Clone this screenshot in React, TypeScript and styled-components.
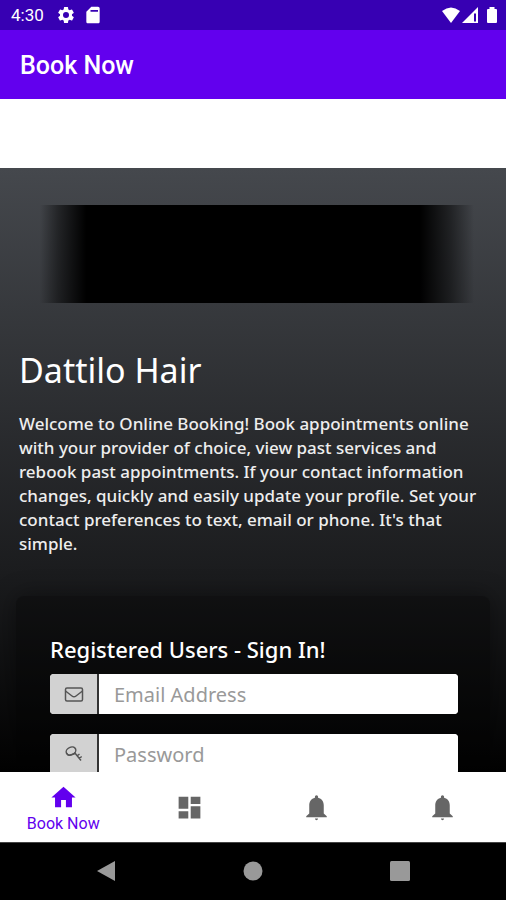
import React from "react";
import styled, { createGlobalStyle } from "styled-components";

const GlobalStyle = createGlobalStyle`
  *, *::before, *::after { box-sizing: border-box; }
  html, body, #root { height: 100%; margin: 0; }
  body { background: #fff; font-family: Roboto, "Noto Sans", sans-serif; }
`;

const Screen = styled.div`
  display: flex;
  flex-direction: column;
  height: 100vh;
  overflow: hidden;
`;

const StatusBar = styled.div`
  flex: none;
  display: flex;
  align-items: center;
  height: 30px;
  padding: 0 5px 0 11px;
  background: #3700b3;
  color: #fff;
  font-size: 17px;
`;

const Clock = styled.span`
  margin-right: 12px;
`;

const StatusIcon = styled.svg<{ $size: number; $gap?: number }>`
  flex: none;
  width: ${({ $size }) => $size}px;
  height: ${({ $size }) => $size}px;
  margin-right: ${({ $gap = 0 }) => $gap}px;
  fill: currentColor;
`;

const Spacer = styled.span`
  flex: 1;
`;

const AppBar = styled.header`
  flex: none;
  display: flex;
  align-items: center;
  height: 69px;
  padding: 2px 20px 0;
  background: #6200ee;
  color: #fff;
`;

const AppTitle = styled.h1`
  margin: 0;
  font-size: 25px;
  font-weight: 500;
  line-height: 32px;
`;

const Content = styled.main`
  flex: 1;
  min-height: 0;
  margin-top: 69px;
  padding: 37px 16px 0;
  overflow: hidden;
  background: linear-gradient(#45484d, #1b1c1e 67%, #020202);
  color: #fff;
  font-family: "Noto Sans", sans-serif;
`;

const Banner = styled.div`
  height: 98px;
  margin: 0 16px 0 24px;
  background: linear-gradient(
    to right,
    transparent,
    rgba(0, 0, 0, 0.45) 18px,
    #000 46px,
    #000 calc(100% - 54px),
    rgba(0, 0, 0, 0.5) calc(100% - 24px),
    transparent
  );
`;

const Intro = styled.section`
  padding: 0 3px;
`;

const SalonName = styled.h2`
  margin: 43px 0 18px;
  font-size: 34px;
  font-weight: 400;
  line-height: 48px;
`;

const Welcome = styled.p`
  margin: 0;
  color: #eee;
  font-size: 17px;
  font-weight: 500;
  line-height: 24px;
`;

const SignIn = styled.form`
  margin-top: 40px;
  padding: 37px 32px 24px 34px;
  border-radius: 8px;
  background: rgba(0, 0, 0, 0.32);
  box-shadow: 0 0 24px rgba(0, 0, 0, 0.4);
`;

const SignInTitle = styled.h3`
  margin: 0 0 9px;
  font-size: 22px;
  font-weight: 500;
  line-height: 32px;
`;

const Field = styled.div`
  display: flex;
  height: 40px;
  margin-bottom: 20px;
  overflow: hidden;
  border-radius: 4px;
  background: #fff;
`;

const FieldLabel = styled.label`
  flex: none;
  display: flex;
  align-items: center;
  justify-content: center;
  width: 49px;
  border-right: 2px solid #333;
  background: #d2d2d2;
`;

const FieldIcon = styled.svg`
  width: 20px;
  height: 20px;
  fill: none;
  stroke: #555;
  stroke-width: 1.5;
  stroke-linejoin: round;
`;

const FieldInput = styled.input`
  flex: 1;
  min-width: 0;
  padding: 0 15px;
  border: 0;
  outline: 0;
  background: #fff;
  color: #333;
  font: 400 20px "Noto Sans", sans-serif;

  &::placeholder {
    color: #999;
    opacity: 1;
  }
`;

const TabBar = styled.nav`
  flex: none;
  display: grid;
  grid-template-columns: repeat(4, 1fr);
  height: 70px;
  background: #fff;
`;

const Tab = styled.button<{ $active?: boolean }>`
  display: flex;
  flex-direction: column;
  align-items: center;
  justify-content: center;
  padding: ${({ $active }) => ($active ? "5px" : "0")} 0 0;
  border: 0;
  background: none;
  color: ${({ $active }) => ($active ? "#6200ee" : "#666")};
  font: 400 16px/24px Roboto, sans-serif;
`;

const TabIcon = styled.svg`
  width: 29px;
  height: 29px;
  fill: currentColor;
`;

const SystemBar = styled.div`
  flex: none;
  display: grid;
  grid-template-columns: repeat(3, 1fr);
  place-items: center;
  height: 58px;
  padding: 0 33px 2px;
  border-top: 1px solid #444;
  background: #000;
`;

const SystemButton = styled.button`
  display: flex;
  padding: 0;
  border: 0;
  background: none;

  svg {
    width: 24px;
    height: 24px;
    fill: #999;
  }
`;

const bell =
  "M12 1.800c-.8 0-1.300.6-1.300 1.300v.8C7.600 4.500 6 7.100 6 10.100V17l-2.500 2.200v.9h17v-.9L18 17v-6.900c0-3-1.600-5.600-4.700-6.200v-.8c0-.7-.5-1.300-1.300-1.300zM10.700 21h2.600q-.2 1.500-1.300 1.500T10.700 21z";

const tabs = [
  { name: "Book Now", label: true, path: "M10 20v-6h4v6h5v-8h3L12 3 2 12h3v8z" },
  { name: "Dashboard", label: false, path: "M3 13h8V3H3v10zm0 8h8v-6H3v6zm10 0h8V11h-8v10zm0-18v6h8V3h-8z" },
  { name: "Notifications", label: false, path: bell },
  { name: "Alerts", label: false, path: bell },
];

export default function App() {
  return (
    <Screen>
      <GlobalStyle />
      <StatusBar>
        <Clock>4:30</Clock>
        <StatusIcon $size={20} $gap={7} viewBox="0 0 24 24" aria-hidden="true">
          <path d="M19.14 12.94c.04-.3.06-.61.06-.94s-.02-.64-.07-.94l2.030-1.580a.49.49 0 0 0 .12-.61l-1.920-3.320a.49.49 0 0 0-.59-.22l-2.390.96a7 7 0 0 0-1.620-.94l-.36-2.540a.48.48 0 0 0-.48-.41h-3.840a.48.48 0 0 0-.47.41l-.36 2.540c-.59.24-1.130.57-1.620.94l-2.390-.96a.48.48 0 0 0-.59.22L2.740 8.870a.48.48 0 0 0 .12.61l2.030 1.580c-.05.3-.09.63-.09.94s.02.64.07.94l-2.030 1.580a.49.49 0 0 0-.12.61l1.920 3.320c.12.22.37.29.59.22l2.390-.96c.5.38 1.030.7 1.620.94l.36 2.540c.05.24.24.41.48.41h3.840c.24 0 .44-.17.47-.41l.36-2.540c.59-.24 1.130-.56 1.620-.94l2.390.96c.22.08.47 0 .59-.22l1.920-3.320a.48.48 0 0 0-.12-.61zM12 15.600a3.600 3.600 0 1 1 0-7.200 3.600 3.600 0 0 1 0 7.200z" />
        </StatusIcon>
        <StatusIcon $size={20} viewBox="0 0 24 24" aria-hidden="true">
          <path d="M18 2h-8L4 8v12c0 1.100.9 2 2 2h12c1.100 0 2-.9 2-2V4c0-1.100-.9-2-2-2zm-9 4h9v2H9z" />
        </StatusIcon>
        <Spacer />
        <StatusIcon $size={20} viewBox="0 0 20 20" aria-hidden="true">
          <path d="M10 18 1 6Q10-1 19 6z" />
        </StatusIcon>
        <StatusIcon $size={18} $gap={4} viewBox="0 0 18 18" aria-hidden="true">
          <path fillRule="evenodd" d="M1 17 17 1v16zM13 7.500v8h2v-8z" />
        </StatusIcon>
        <StatusIcon $size={18} viewBox="0 0 18 18" aria-hidden="true">
          <path d="M6.500 1h5v2H13q1 0 1 1v12q0 1-1 1H5q-1 0-1-1V4q0-1 1-1h1.500z" />
        </StatusIcon>
      </StatusBar>
      <AppBar>
        <AppTitle>Book Now</AppTitle>
      </AppBar>
      <Content>
        <Banner />
        <Intro>
          <SalonName>Dattilo Hair</SalonName>
          <Welcome>
            Welcome to Online Booking! Book appointments online with your provider of choice, view past
            services and rebook past appointments. If your contact information changes, quickly and easily
            update your profile. Set your contact preferences to text, email or phone. It's that simple.
          </Welcome>
        </Intro>
        <SignIn>
          <SignInTitle>Registered Users - Sign In!</SignInTitle>
          <Field>
            <FieldLabel htmlFor="email" aria-label="Email Address">
              <FieldIcon viewBox="0 0 20 20">
                <rect x="1.5" y="4" width="17" height="13" rx="1.5" />
                <path d="m1.500 7 6.500 5q2 1.500 4 0l6.500-5" />
              </FieldIcon>
            </FieldLabel>
            <FieldInput id="email" type="email" placeholder="Email Address" />
          </Field>
          <Field>
            <FieldLabel htmlFor="password" aria-label="Password">
              <FieldIcon viewBox="0 0 20 20">
                <ellipse cx="7" cy="7" rx="5" ry="3.800" transform="rotate(-25 7 7)" />
                <path d="M3 9.500Q4 12 6.500 11L11 9.500M10.500 8.500 17 16.500M13 12l2.500-2M15.200 14.500l2.500-2" />
              </FieldIcon>
            </FieldLabel>
            <FieldInput id="password" type="password" placeholder="Password" />
          </Field>
        </SignIn>
      </Content>
      <TabBar>
        {tabs.map((tab) => (
          <Tab key={tab.name} type="button" $active={tab.label} aria-label={tab.name}>
            <TabIcon viewBox="0 0 24 24" aria-hidden="true">
              <path d={tab.path} />
            </TabIcon>
            {tab.label && tab.name}
          </Tab>
        ))}
      </TabBar>
      <SystemBar>
        <SystemButton type="button" aria-label="Back">
          <svg viewBox="0 0 24 24"><path d="M21 2v20L3 12z" /></svg>
        </SystemButton>
        <SystemButton type="button" aria-label="Home">
          <svg viewBox="0 0 24 24"><circle cx="12" cy="12" r="9.500" /></svg>
        </SystemButton>
        <SystemButton type="button" aria-label="Recent apps">
          <svg viewBox="0 0 24 24"><rect x="2" y="2" width="20" height="20" rx="1.500" /></svg>
        </SystemButton>
      </SystemBar>
    </Screen>
  );
}
